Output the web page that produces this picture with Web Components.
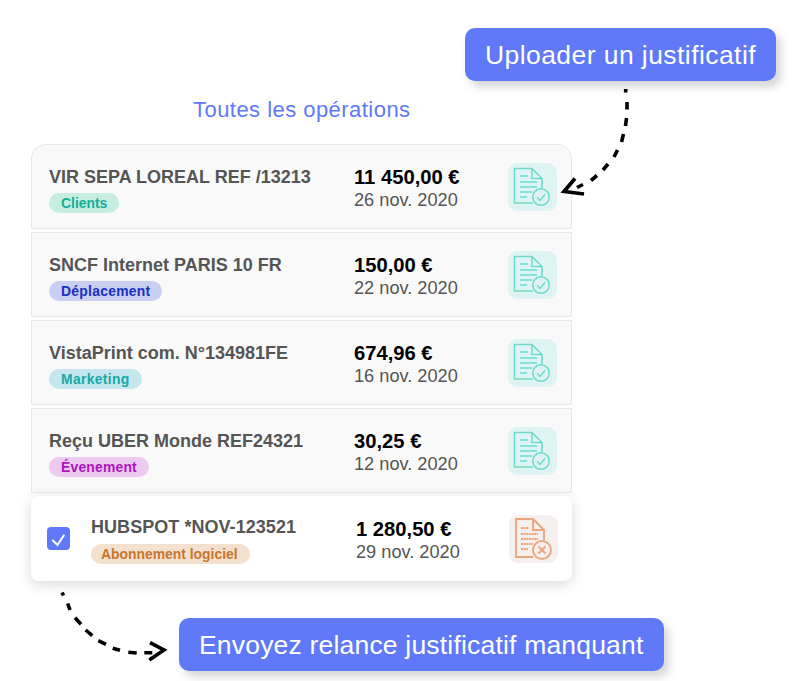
<!DOCTYPE html>
<html lang="fr"><head><meta charset="utf-8"><title>Opérations</title>
<style>
html,body{margin:0;padding:0;background:#fff}
body{font-family:"Liberation Sans",Arial,sans-serif;width:807px;height:681px;overflow:hidden}
</style></head><body>
<op-app>
  <action-btn slot="top" style="--ls:.43px">Uploader un justificatif</action-btn>
  <op-row label="VIR SEPA LOREAL REF /13213" amount="11 450,00 €" date="26 nov. 2020" first><op-badge tone="clients">Clients</op-badge></op-row>
  <op-row label="SNCF Internet PARIS 10 FR" amount="150,00 €" date="22 nov. 2020"><op-badge tone="depl">Déplacement</op-badge></op-row>
  <op-row label="VistaPrint com. N°134981FE" amount="674,96 €" date="16 nov. 2020"><op-badge tone="mkt">Marketing</op-badge></op-row>
  <op-row label="Reçu UBER Monde REF24321" amount="30,25 €" date="12 nov. 2020"><op-badge tone="evt">Évenement</op-badge></op-row>
  <op-row label="HUBSPOT *NOV-123521" amount="1 280,50 €" date="29 nov. 2020" selected missing><op-badge tone="abo">Abonnement logiciel</op-badge></op-row>
  <action-btn slot="bottom" style="--ls:.19px">Envoyez relance justificatif manquant</action-btn>
</op-app>
<script>
function tpl(html){const t=document.createElement('template');t.innerHTML=html;return t}
class Base extends HTMLElement{
  constructor(){super();this.attachShadow({mode:'open'}).appendChild(this.constructor.t.content.cloneNode(true))}
}
class OpApp extends Base{
  static t=tpl(`<style>
  :host{display:block;position:relative;width:807px;height:681px}
  .top{display:flex;justify-content:flex-end;padding:28px 31px 0 0}
  h2{margin:0;padding:16px 0 0 193px;height:48px;box-sizing:border-box;font:400 22px/26px "Liberation Sans",Arial,sans-serif;letter-spacing:.46px;color:#6079f8}
  .list{display:flex;flex-direction:column;gap:3px;width:541px;margin:15px 0 0 31px}
  .bottom{padding:37px 0 0 179px;display:flex}
  svg{position:absolute;left:0;top:0;pointer-events:none}
  </style>
  <div class="top"><slot name="top"></slot></div>
  <h2>Toutes les opérations</h2>
  <div class="list"><slot></slot></div>
  <div class="bottom"><slot name="bottom"></slot></div>
  <svg width="807" height="681" fill="none" stroke="#000" stroke-width="3.6">
    <path d="M625.7 89V92.5M627 102V109.5M626.5 118L625.5 126M623.5 134L621.5 142M617.5 150L614 157M608 164L603 170M597 175.5L591 180.5M583 184.5L577 187.5"/>
    <path d="M575 178.5L564 191.5L584 194"/>
    <path d="M62 592.5L63.5 595.5M67.7 603.5L70 610M75 617.7L81 624.3M85.7 630L92.3 635.7M98.3 640.7L106 644.3M112.7 648.3L120 650.3M128.3 652.3L136.7 653M144.3 652.7H152.3"/>
    <path d="M150 642.7L164 650L149.3 660"/>
  </svg>`);
}
class ActionBtn extends Base{
  static t=tpl(`<style>
  :host{display:block;height:53px;box-sizing:border-box;padding:0 20px;background:#6079f8;color:#fff;border-radius:10px;
    font:400 26.5px/54px "Liberation Sans",Arial,sans-serif;letter-spacing:var(--ls,0);white-space:nowrap;box-shadow:5px 6px 10px rgba(0,0,0,.17)}
  </style><slot></slot>`);
}
class OpBadge extends Base{
  static t=tpl(`<style>
  :host{display:inline-block;height:20px;border-radius:10px;padding:0 12px;font:700 13.9px/20px "Liberation Sans",Arial,sans-serif;white-space:nowrap}
  :host([tone=clients]){background:#c5eee0;color:#14ad97}
  :host([tone=depl]){background:#c9cff0;color:#1b2fc4;letter-spacing:.27px}
  :host([tone=mkt]){background:#c4e6ee;color:#1aa8a8;letter-spacing:.33px}
  :host([tone=evt]){background:#ecc9ef;color:#ad14bd;letter-spacing:.2px}
  :host([tone=abo]){background:#f4e0cf;color:#c8762b;padding:0 12px 0 10px}
  </style><slot></slot>`);
}
class DocIcon extends Base{
  static observedAttributes=['missing'];
  static t=tpl(`<style>
  :host{display:block;width:49px;height:48px;border-radius:9px;background:var(--bg);flex:none}
  svg{display:block}
  .ln{stroke-dasharray:var(--dash,none)}
  </style>
  <svg width="49" height="48" fill="none" stroke="var(--c)" stroke-width="var(--sw,1.5)">
    <path id="p" d="M25 40H6.5V5.500H24L34 15.500V25"/><path id="f" d="M24 5.500V15.500H34"/>
    <path class="ln" d="M12 13H20M12 19H29M12 24H29M12 29H24M12 34H19"/>
    <circle id="c" cx="33" cy="34" r="8.300"/>
    <path id="m" d="M29 34.500L32 37.500L37 31.500"/>
  </svg>`);
  attributeChangedCallback(){
    const $=i=>this.shadowRoot.getElementById(i);
    if(this.hasAttribute('missing')){
      $('m').setAttribute('d','M29.500 31.500L36.500 38.500M36.500 31.500L29.500 38.500');
      $('p').setAttribute('d','M24 42H7V4H24L35 15V25');
      $('f').setAttribute('d','M24 4V15H35');
      $('c').setAttribute('cy','35');
      $('c').setAttribute('r','9');
    }
  }
}
class OpRow extends Base{
  static t=tpl(`<style>
  :host{display:block;height:85px;box-sizing:border-box;background:#f9f9fa;border:1px solid #e8e8e9;font-family:"Liberation Sans",Arial,sans-serif}
  :host([first]){border-radius:14px 14px 0 0}
  :host([selected]){background:#fff;border:0;border-radius:8px;box-shadow:0 3px 14px rgba(0,0,0,.16)}
  .row{display:flex;align-items:center;height:100%;box-sizing:border-box;padding:0 14px 0 17px}
  :host([selected]) .row{padding:0 14px 0 16px}
  .cb{display:none;width:23px;height:23px;border-radius:4px;background:#6079f8;margin-right:21px;flex:none}
  :host([selected]) .cb{display:block}
  .main{width:305px;flex:none;padding-top:7px}
  :host([selected]) .main{width:265px;padding-top:4px}
  .label{font-weight:700;font-size:18px;line-height:20px;color:#555;white-space:nowrap;margin-bottom:6px}
  :host([selected]) .label{margin-bottom:7px;letter-spacing:.05px}
  .bd{display:flex;height:20px}
  .amt{flex:1;padding-top:4px}
  .a{font-weight:700;font-size:20.2px;line-height:22px;color:#000;white-space:nowrap}
  .d{font-size:18.2px;line-height:22px;margin-top:1px;color:#555;white-space:nowrap}
  doc-icon{margin-top:1px}
  svg{display:block}
  </style>
  <div class="row">
    <div class="cb"><svg width="23" height="23" fill="none" stroke="#fff" stroke-width="2"><path d="M5.300 13L10.500 18L17.300 7.700"/></svg></div>
    <div class="main"><div class="label"></div><div class="bd"><slot></slot></div></div>
    <div class="amt"><div class="a"></div><div class="d"></div></div>
    <doc-icon></doc-icon>
  </div>`);
  connectedCallback(){
    const s=this.shadowRoot;
    s.querySelector('.label').textContent=this.getAttribute('label');
    s.querySelector('.a').textContent=this.getAttribute('amount');
    s.querySelector('.d').textContent=this.getAttribute('date');
    const i=s.querySelector('doc-icon');
    if(this.hasAttribute('missing')){i.setAttribute('missing','');i.style.cssText='--bg:#f5efed;--c:#eba680;--sw:1.9;--dash:2 .6'}
    else i.style.cssText='--bg:#dff4f2;--c:#6cdcc9';
  }
}
customElements.define('op-app',OpApp);
customElements.define('action-btn',ActionBtn);
customElements.define('op-badge',OpBadge);
customElements.define('doc-icon',DocIcon);
customElements.define('op-row',OpRow);
</script>
</body></html>
